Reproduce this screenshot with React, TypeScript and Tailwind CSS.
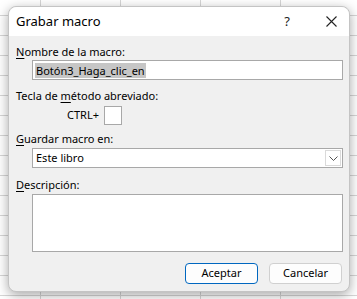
import React from "react"

const font = { fontFamily: '"Noto Sans", "Liberation Sans", sans-serif' }

function Label({ pre, k, post }: { pre?: string; k: string; post: string }) {
  return (
    <div className="h-[16px] ml-[7px] text-[11px] leading-[16px] text-black whitespace-pre">
      {pre}
      <span className="underline underline-offset-2">{k}</span>
      {post}
    </div>
  )
}

export default function App() {
  return (
    <div
      className="w-[357px] h-[299px] overflow-hidden bg-white bg-[linear-gradient(to_right,#d6d6d6_1px,transparent_1px),linear-gradient(to_bottom,#d6d6d6_1px,transparent_1px)] bg-[size:80px_20px] bg-[position:40px_15px] pt-[6px] pl-[8px]"
      style={font}
    >
      <div className="w-[342px] h-[286px] rounded-[8px] bg-[#f0f0f0] border border-[#c4c4c4] shadow-[0_3px_12px_rgba(0,0,0,0.35)] flex flex-col">
        {/* title bar */}
        <div className="h-[29px] bg-white rounded-t-[8px] flex items-center pl-[7px] pr-[12px]">
          <span className="text-[13px] text-black">Grabar macro</span>
          <span className="ml-auto mr-[36px] text-[13px] text-[#222]">?</span>
          <svg width="11" height="11" viewBox="0 0 11 11" className="mb-[1px]">
            <path d="M0.5 0.5 L10.5 10.5 M10.5 0.5 L0.5 10.5" stroke="#222" strokeWidth="1.1" />
          </svg>
        </div>

        <div className="mt-[8px]">
          <Label k="N" post="ombre de la macro:" />
        </div>
        <div className="ml-[23px] w-[311px] h-[20px] bg-white border border-[#a8a8a8] flex items-center pl-[2px]">
          <span className="bg-[#c6c6c6] text-[11px] leading-[15px] px-[1px] text-black">Botón3_Haga_clic_en</span>
        </div>

        <div className="mt-[8px]">
          <Label pre="Tecla de " k="m" post="étodo abreviado:" />
        </div>
        <div className="mt-[2px] h-[19px] flex items-center">
          <span className="ml-[58px] text-[11px] text-black">CTRL+</span>
          <div className="ml-[5px] w-[18px] h-[19px] bg-white border border-[#a8a8a8]" />
        </div>

        <div className="mt-[6px]">
          <Label k="G" post="uardar macro en:" />
        </div>
        <div className="mt-[1px] ml-[23px] w-[311px] h-[20px] bg-white border border-[#a8a8a8] flex items-center">
          <span className="pl-[3px] text-[11px] text-black">Este libro</span>
          <div className="ml-auto mr-[1px] w-[16px] h-[16px] border border-[#dadada] bg-white flex items-center justify-center">
            <svg width="9" height="5" viewBox="0 0 9 5">
              <path d="M0.5 0.5 L4.5 4.5 L8.5 0.5" stroke="#555" strokeWidth="1" fill="none" />
            </svg>
          </div>
        </div>

        <div className="mt-[9px]">
          <Label k="D" post="escripción:" />
        </div>
        <div className="mt-[1px] ml-[23px] w-[311px] h-[58px] bg-white border border-[#a8a8a8]" />

        <div className="mt-[11px] flex justify-end gap-[11px] pr-[7px]">
          <button className="w-[73px] h-[21px] rounded-[4px] border border-[#0067c0] bg-[#fdfdfd] text-[11px] text-black">
            Aceptar
          </button>
          <button className="w-[73px] h-[21px] rounded-[4px] border border-[#d0d0d0] bg-[#fdfdfd] text-[11px] text-black">
            Cancelar
          </button>
        </div>
      </div>
    </div>
  )
}
